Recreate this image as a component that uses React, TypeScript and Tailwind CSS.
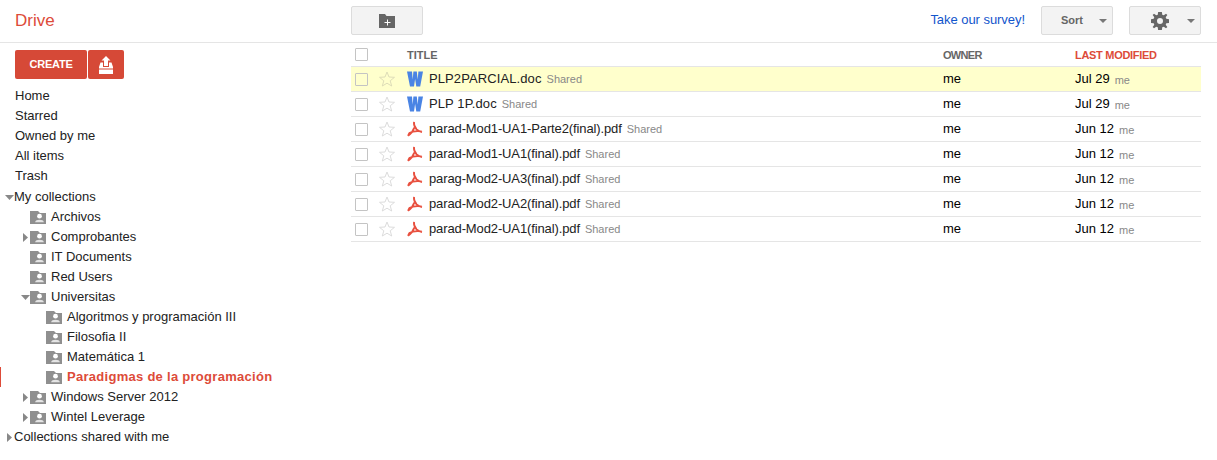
import React from 'react';

const FONT = "font-['Liberation_Sans',Arial,sans-serif]";

function SharedFolder() {
  return (
    <svg width="16" height="13" viewBox="0 0 16 13" className="shrink-0">
      <path d="M0 0 H8 L10 2 H16 V13 H0 Z" fill="#8f8f8f" />
      <circle cx="9.5" cy="5.2" r="2.4" fill="#fff" />
      <path d="M5.2 11.2 C5.2 8 13.8 8 13.8 11.2 Z" fill="#e4e4e4" />
    </svg>
  );
}

function Arrow({ dir }: { dir?: 'right' | 'down' }) {
  if (dir === 'right') {
    return (
      <svg width="5" height="9" viewBox="0 0 5 9" className="shrink-0">
        <path d="M0 0 L5 4.5 L0 9 Z" fill="#888" />
      </svg>
    );
  }
  return (
    <svg width="9" height="5" viewBox="0 0 9 5" className="shrink-0">
      <path d="M0 0 H9 L4.5 5 Z" fill="#888" />
    </svg>
  );
}

function Star({ selected }: { selected?: boolean }) {
  return (
    <svg width="16" height="16" viewBox="0 0 16 16" className="shrink-0">
      <path
        d="M8 1 L10 6 L15.5 6.3 L11.2 9.8 L12.7 15 L8 12.2 L3.3 15 L4.8 9.8 L0.5 6.3 L6 6 Z"
        fill="none"
        stroke={selected ? '#deddb8' : '#dcdcdc'}
        strokeWidth="1"
      />
    </svg>
  );
}

function WordIcon() {
  return (
    <svg width="16" height="16" viewBox="0 0 16 16" className="shrink-0">
      <path
        d="M0 0.5 H5 L5.7 8.5 L6.4 0.5 H9.8 L10.7 8.5 L11.4 0.5 H16 L13.2 15.5 H9.3 L8.1 8 L7 15.5 H3 Z"
        fill="#4a84e4"
      />
    </svg>
  );
}

function PdfIcon() {
  return (
    <svg width="16" height="16" viewBox="0 0 16 16" className="shrink-0">
      <path
        d="M7 0.8 C6.6 3.5 8 6.5 9.6 8.4 C11 9.8 13 10.8 15 11.2 M1 14.8 C3.4 13.2 6 10.5 7.3 6.5 M2.2 12 C5.5 10.2 10.5 9.8 14.6 10.4 M1 14.8 L2.4 11.9"
        fill="none"
        stroke="#e8503f"
        strokeWidth="1.8"
      />
    </svg>
  );
}

function CheckBox() {
  return <span className="block w-[13px] h-[13px] border border-[#c4c4c4] rounded-[1px] shrink-0" />;
}

function Caret() {
  return (
    <svg width="8" height="4" viewBox="0 0 8 4">
      <path d="M0 0 H8 L4 4 Z" fill="#777" />
    </svg>
  );
}

const tree: { label: string; indent: number; arrow?: 'right' | 'down'; folder?: boolean; active?: boolean }[] = [
  { label: 'My collections', indent: 5, arrow: 'down' },
  { label: 'Archivos', indent: 23, folder: true },
  { label: 'Comprobantes', indent: 23, arrow: 'right', folder: true },
  { label: 'IT Documents', indent: 23, folder: true },
  { label: 'Red Users', indent: 23, folder: true },
  { label: 'Universitas', indent: 21, arrow: 'down', folder: true },
  { label: 'Algoritmos y programación III', indent: 39, folder: true },
  { label: 'Filosofia II', indent: 39, folder: true },
  { label: 'Matemática 1', indent: 39, folder: true },
  { label: 'Paradigmas de la programación', indent: 39, folder: true, active: true },
  { label: 'Windows Server 2012', indent: 23, arrow: 'right', folder: true },
  { label: 'Wintel Leverage', indent: 23, arrow: 'right', folder: true },
  { label: 'Collections shared with me', indent: 7, arrow: 'right' },
];

const files = [
  { name: 'PLP2PARCIAL.doc', type: 'word', date: 'Jul 29', selected: true },
  { name: 'PLP 1P.doc', type: 'word', date: 'Jul 29' },
  { name: 'parad-Mod1-UA1-Parte2(final).pdf', type: 'pdf', date: 'Jun 12' },
  { name: 'parad-Mod1-UA1(final).pdf', type: 'pdf', date: 'Jun 12' },
  { name: 'parag-Mod2-UA3(final).pdf', type: 'pdf', date: 'Jun 12' },
  { name: 'parad-Mod2-UA2(final).pdf', type: 'pdf', date: 'Jun 12' },
  { name: 'parad-Mod2-UA1(final).pdf', type: 'pdf', date: 'Jun 12' },
];

export default function App() {
  return (
    <div className={`${FONT} w-[1217px] h-[460px] bg-white text-[13px] text-[#222] overflow-hidden`}>
      {/* Top bar */}
      <header className="h-[43px] border-b border-[#e5e5e5] flex items-start">
        <div className="w-[351px] pl-[15px] pt-[10px] text-[#dd4b39] text-[17px] leading-[22px]">Drive</div>
        <button className="mt-[6px] w-[72px] h-[29px] border border-[#dcdcdc] rounded-[2px] bg-[#f3f3f3] flex items-center justify-center">
          <svg width="16" height="14" viewBox="0 0 16 14">
            <path d="M0 0 H6 L7.5 2 H16 V14 H0 Z" fill="#666" />
            <path d="M8 5.5 H9 V8 H11.5 V9 H9 V11.5 H8 V9 H5.5 V8 H8 Z" fill="#fff" />
          </svg>
        </button>
        <a className="ml-auto mt-[12px] text-[#1155cc] text-[13px] leading-[16px] tracking-[-0.05px]">Take our survey!</a>
        <button className="ml-[16px] mt-[6px] w-[72px] h-[29px] border border-[#dcdcdc] rounded-[2px] bg-[#f3f3f3] flex items-center text-[11px] font-bold text-[#666]">
          <span className="ml-[19px]">Sort</span>
          <span className="ml-auto mr-[5px] flex"><Caret /></span>
        </button>
        <button className="ml-[16px] mr-[16px] mt-[6px] w-[72px] h-[29px] border border-[#dcdcdc] rounded-[2px] bg-[#f3f3f3] flex items-center text-[#666]">
          <svg width="18" height="18" viewBox="0 0 24 24" className="ml-[21px]">
            <path
              fill="#666"
              fillRule="evenodd"
              d="M9.5 0 H14.5 L15 3.6 L17 4.4 L20 2.2 L21.8 4 L19.6 7 L20.4 9 L24 9.5 V14.5 L20.4 15 L19.6 17 L21.8 20 L20 21.8 L17 19.6 L15 20.4 L14.5 24 H9.5 L9 20.4 L7 19.6 L4 21.8 L2.2 20 L4.4 17 L3.6 15 L0 14.5 V9.5 L3.6 9 L4.4 7 L2.2 4 L4 2.2 L7 4.4 L9 3.6 Z M12 8 A4 4 0 1 0 12 16 A4 4 0 1 0 12 8 Z"
            />
          </svg>
          <span className="ml-auto mr-[5px] flex"><Caret /></span>
        </button>
      </header>

      <div className="flex">
        {/* Sidebar */}
        <aside className="w-[351px] shrink-0">
          <div className="flex gap-px pl-[15px] pt-[7px] pb-[7px]">
            <button className="w-[72px] h-[29px] bg-[#d64937] rounded-[2px] text-white text-[11px] font-bold tracking-[-0.2px]">CREATE</button>
            <button className="w-[36px] h-[29px] bg-[#d64937] rounded-[2px] flex items-center justify-center">
              <svg width="14" height="18" viewBox="0 0 14 18">
                <path d="M7 0 L11.5 4.5 H9 V10 H5 V4.5 H2.5 Z" fill="#fff" />
                <path d="M1.5 6.5 H4 V11 H10 V6.5 H12.5 L14 11 V12.5 H0 V11 Z" fill="#fff" />
                <path d="M0 13.5 H14 V18 H0 Z" fill="#fff" />
              </svg>
            </button>
          </div>
          <nav className="flex flex-col">
            {['Home', 'Starred', 'Owned by me', 'All items', 'Trash'].map((label) => (
              <div key={label} className="h-[20px] pl-[15px] leading-[20px] text-[#222]">{label}</div>
            ))}
            <div className="mt-px flex flex-col">
              {tree.map((item) => (
                <div
                  key={item.label}
                  className={`relative h-[20px] flex items-center ${item.active ? 'text-[#dd4b39] font-bold tracking-[0.28px]' : 'text-[#222]'}`}
                  style={{ paddingLeft: item.indent }}
                >
                  {item.active && <span className="absolute left-0 top-0 w-px h-[20px] bg-[#dd4b39]" />}
                  {item.arrow && <span className={`flex ${item.folder ? 'mr-px' : item.arrow === 'right' ? 'mr-[2px]' : ''}`}><Arrow dir={item.arrow} /></span>}
                  {item.folder && <span className={item.arrow ? (item.arrow === 'down' ? '-ml-px' : 'ml-px') : 'ml-[7px]'}><SharedFolder /></span>}
                  <span className={item.folder ? 'ml-[5px]' : ''}>{item.label}</span>
                </div>
              ))}
            </div>
          </nav>
        </aside>

        {/* File list */}
        <main className="w-[850px]">
          <div className="h-[24px] flex items-center text-[11px] font-bold text-[#666] border-b border-[#e5e5e5]">
            <span className="ml-[4px]"><CheckBox /></span>
            <span className="ml-[39px] w-[536px] pt-[2px]">TITLE</span>
            <span className="w-[132px] pt-[2px] tracking-[-0.7px]">OWNER</span>
            <span className="text-[#dd4b39] pt-[2px] tracking-[-0.3px]">LAST MODIFIED</span>
          </div>
          {files.map((file) => (
            <div
              key={file.name}
              className={`h-[25px] flex items-center border-b border-[#e5e5e5] ${file.selected ? 'bg-[#ffffcc]' : 'bg-white'}`}
            >
              <span className="ml-[4px]"><CheckBox /></span>
              <span className="ml-[11px]"><Star selected={file.selected} /></span>
              <span className="ml-[12px] w-[16px] flex justify-center">
                {file.type === 'word' ? <WordIcon /> : <PdfIcon />}
              </span>
              <div className="ml-[6px] w-[514px] flex items-baseline">
                <span className={`text-[#222] ${file.type === 'word' ? 'tracking-[0.1px]' : 'tracking-[-0.12px]'}`}>{file.name}</span>
                <span className="ml-[5px] text-[11px] text-[#888]">Shared</span>
              </div>
              <span className="w-[132px] text-black">me</span>
              <span className="text-black">{file.date}</span>
              <span className="ml-[5px] text-[11px] text-[#888] relative top-px">me</span>
            </div>
          ))}
        </main>
      </div>
    </div>
  );
}
